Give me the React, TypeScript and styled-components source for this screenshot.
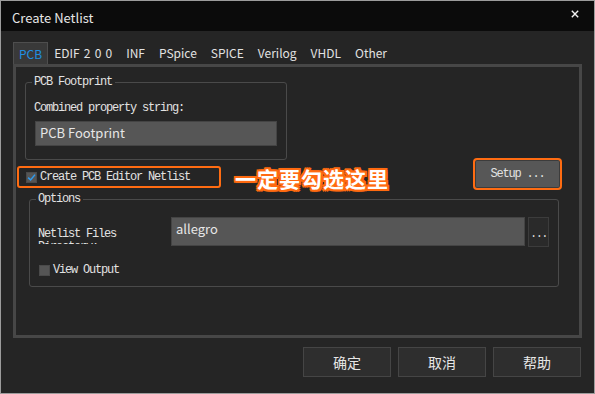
import React from "react"
import styled, { createGlobalStyle } from "styled-components"

const sans = `"Noto Sans CJK SC", "Noto Sans", sans-serif`
const mono = `"Liberation Mono", "DejaVu Sans Mono", monospace`

const Global = createGlobalStyle`
  html, body {
    margin: 0;
    padding: 0;
    background: #252525;
  }
  * { box-sizing: border-box; }
`

const tabs = ["PCB", "EDIF 2 0 0", "INF", "PSpice", "SPICE", "Verilog", "VHDL", "Other"]

export default function App() {
  return <>
    <Global />
    <Window>
      <TitleBar>
        <Title>Create Netlist</Title>
        <Close>
          <svg width="8" height="8" viewBox="0 0 8 8">
            <path d="M0.8 0.8 L7.2 7.2 M7.2 0.8 L0.8 7.2" stroke="#f2f2f2" strokeWidth="1.4" />
          </svg>
        </Close>
      </TitleBar>
      <Body>
        <TabRow>
          {tabs.map((t, i) => <Tab key={t} $active={i == 0}>{t}</Tab>)}
        </TabRow>
        <Panel>
          <Group $left={9} $top={9} $width={262} $padTop={14} $padBottom={13}>
            <Legend>PCB Footprint</Legend>
            <MonoText>Combined property string:</MonoText>
            <Field $width={242} $height={25} style={{ marginTop: 6, marginLeft: 1 }}>PCB Footprint</Field>
          </Group>
          <CheckRow>
            <Highlight>
              <Check $checked>
                <svg width="9" height="9" viewBox="0 0 9 9">
                  <path d="M1.2 4.6 L3.6 7 L8 1.6" fill="none" stroke="#2e9cf0" strokeWidth="1.5" />
                </svg>
              </Check>
              <MonoText>Create PCB Editor Netlist</MonoText>
            </Highlight>
            <Note>一定要勾选这里</Note>
            <SetupButton>Setup ...</SetupButton>
          </CheckRow>
          <Group $left={13} $top={3} $width={530} $padTop={12} $padBottom={9}>
            <Legend>Options</Legend>
            <DirRow>
              <DirLabel>Netlist Files Directory:</DirLabel>
              <Field $width={354} $height={29}>allegro</Field>
              <DotsButton>...</DotsButton>
            </DirRow>
            <ViewRow>
              <Check />
              <MonoText>View Output</MonoText>
            </ViewRow>
          </Group>
        </Panel>
        <ButtonRow>
          <DialogButton>确定</DialogButton>
          <DialogButton>取消</DialogButton>
          <DialogButton>帮助</DialogButton>
        </ButtonRow>
      </Body>
    </Window>
  </>
}

const Window = styled.div`
  width: 595px;
  height: 394px;
  border: 1px solid #9c9c9c;
  background: #252525;
  display: flex;
  flex-direction: column;
  overflow: hidden;
`
const TitleBar = styled.div`
  height: 30px;
  background: #0b0b0b;
  display: flex;
  align-items: center;
  justify-content: space-between;
  padding: 2px 0 0 11px;
`
const Title = styled.div`
  font-family: ${sans};
  font-size: 13px;
  color: #e6e6e6;
`
const Close = styled.div`
  align-self: flex-start;
  margin-top: 7px;
  margin-right: 15px;
  display: flex;
`
const Body = styled.div`
  flex: 1;
  display: flex;
  flex-direction: column;
  padding: 11px 12px 0 12px;
`
const TabRow = styled.div`
  display: flex;
  height: 22px;
`
const Tab = styled.div<{ $active?: boolean }>`
  height: 22px;
  line-height: ${p => p.$active ? 21 : 22}px;
  padding: 0 ${p => p.$active ? 5 : 7}px;
  margin-right: ${p => p.$active ? -1 : 0}px;
  font-family: ${sans};
  font-size: 12px;
  word-spacing: 1.5px;
  color: ${p => p.$active ? "#1f8fe2" : "#e2e2e2"};
  background: ${p => p.$active ? "#393939" : "transparent"};
  border: ${p => p.$active ? "1px solid #4e4e4e" : "none"};
  border-bottom: none;
`
const Panel = styled.div`
  height: 274px;
  border: 3px solid #474747;
  display: flex;
  flex-direction: column;
  align-items: flex-start;
`
const Group = styled.fieldset<{ $left: number; $top: number; $width: number; $padTop: number; $padBottom: number }>`
  margin: ${p => p.$top}px 0 0 ${p => p.$left}px;
  width: ${p => p.$width}px;
  border: 1px solid #4a4a4a;
  border-radius: 3px;
  padding: ${p => p.$padTop}px 9px ${p => p.$padBottom}px 8px;
  min-width: 0;
`
const Legend = styled.legend`
  font-family: ${mono};
  font-size: 12px;
  letter-spacing: -1.2px;
  line-height: 12px;
  color: #e2e2e2;
  padding: 0 3px 0 2px;
  margin-left: -2px;
`
const MonoText = styled.div`
  font-family: ${mono};
  font-size: 12px;
  letter-spacing: -1.2px;
  line-height: 13px;
  color: #e2e2e2;
  white-space: nowrap;
`
const Field = styled.div<{ $width: number; $height: number }>`
  width: ${p => p.$width}px;
  height: ${p => p.$height}px;
  background: #565656;
  border: 1px solid #444;
  font-family: ${sans};
  font-size: 13px;
  color: #e6e6e6;
  padding: 1px 4px;
  line-height: 20px;
`
const CheckRow = styled.div`
  align-self: stretch;
  display: flex;
  align-items: flex-end;
  height: 31px;
  margin-top: -1px;
`
const Highlight = styled.div`
  margin-left: 1px;
  margin-bottom: 2px;
  width: 204px;
  height: 22px;
  border: 2px solid #ff6c12;
  border-radius: 3px;
  display: flex;
  align-items: center;
  gap: 3px;
  padding-left: 7px;
`
const Check = styled.div<{ $checked?: boolean }>`
  width: 11px;
  height: 11px;
  background: #555;
  border: 1px solid #4a4a4a;
  display: flex;
  align-items: center;
  justify-content: center;
  flex-shrink: 0;
`
const Note = styled.div`
  margin-left: 14px;
  font-family: ${sans};
  font-size: 21px;
  font-weight: 700;
  line-height: 24px;
  color: #fff;
  letter-spacing: 1px;
  text-shadow:
    2px 0 0 #ff6a10, -2px 0 0 #ff6a10, 0 2px 0 #ff6a10, 0 -2px 0 #ff6a10,
    2px 2px 0 #ff6a10, -2px -2px 0 #ff6a10, 2px -2px 0 #ff6a10, -2px 2px 0 #ff6a10,
    1px 0 1px #ff6a10, 0 0 3px #ffb070;
`
const SetupButton = styled.div`
  margin-left: auto;
  margin-right: 17px;
  width: 89px;
  height: 32px;
  flex-shrink: 0;
  border: 2px solid #ff6c12;
  border-radius: 4px;
  background: #575757;
  box-shadow: inset 0 0 0 1px #3c3c3c;
  display: flex;
  align-items: center;
  justify-content: center;
  font-family: ${mono};
  font-size: 12px;
  letter-spacing: -1.2px;
  color: #e2e2e2;
`
const DirRow = styled.div`
  display: flex;
  align-items: flex-start;
  gap: 3px;
`
const DirLabel = styled.div`
  width: 130px;
  height: 16px;
  margin-top: 11px;
  overflow: hidden;
  font-family: ${mono};
  font-size: 12px;
  letter-spacing: -1.2px;
  line-height: 13px;
  color: #e2e2e2;
  padding-right: 50px;
`
const DotsButton = styled.div`
  width: 21px;
  height: 30px;
  background: #2a2a2a;
  border: 1px solid #3c3c3c;
  font-family: ${mono};
  font-size: 12px;
  letter-spacing: -1.5px;
  color: #d8d8d8;
  display: flex;
  align-items: center;
  justify-content: center;
  padding-top: 3px;
`
const ViewRow = styled.div`
  display: flex;
  align-items: center;
  gap: 3px;
  margin-top: 17px;
  padding-left: 1px;
`
const ButtonRow = styled.div`
  display: flex;
  justify-content: flex-end;
  gap: 7px;
  margin-top: 9px;
  padding-right: 1px;
`
const DialogButton = styled.div`
  width: 88px;
  height: 30px;
  background: #2e2e2e;
  border: 1px solid #454545;
  display: flex;
  align-items: center;
  justify-content: center;
  font-family: ${sans};
  font-size: 14px;
  color: #e6e6e6;
`
